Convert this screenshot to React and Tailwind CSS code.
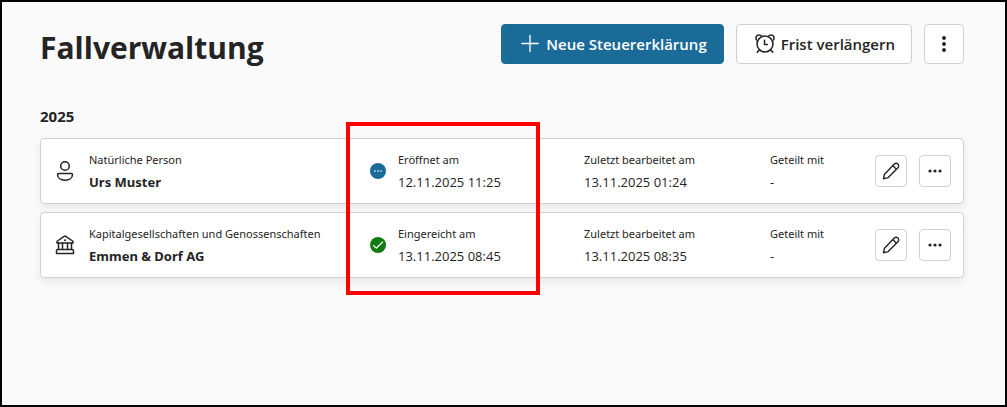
const cases = [
  {
    id: 1,
    icon: PersonIcon,
    type: "Natürliche Person",
    name: "Urs Muster",
    statusIcon: OpenStatusIcon,
    status: "Eröffnet am",
    statusDate: "12.11.2025 11:25",
    updated: "13.11.2025 01:24",
    shared: "-",
  },
  {
    id: 2,
    icon: BankIcon,
    type: "Kapitalgesellschaften und Genossenschaften",
    name: "Emmen & Dorf AG",
    statusIcon: DoneStatusIcon,
    status: "Eingereicht am",
    statusDate: "13.11.2025 08:45",
    updated: "13.11.2025 08:35",
    shared: "-",
  },
];

export default function App() {
  return (
    <div className="min-h-screen border-2 border-black bg-[#fafafa] pt-[22px] pr-[41px] pb-8 pl-[38px] font-['Open_Sans','Noto_Sans',sans-serif] text-[#242424]">
      <header className="flex items-start justify-between">
        <h1 className="pt-1 text-[30px] leading-10 font-bold">Fallverwaltung</h1>
        <div className="flex gap-3">
          <button className="flex h-10 items-center gap-1 rounded border border-[#1b6b98] bg-[#1b6b98] px-4 text-[15px] font-semibold whitespace-nowrap text-white">
            <PlusIcon />
            Neue Steuererklärung
          </button>
          <button className="flex h-10 items-center gap-1 rounded border border-[#d1d1d1] bg-white px-4 text-[15px] font-semibold whitespace-nowrap">
            <AlarmIcon />
            Frist verlängern
          </button>
          <button
            aria-label="Weitere Aktionen"
            className="flex size-10 items-center justify-center rounded border border-[#d1d1d1] bg-white"
          >
            <DotsIcon className="size-6 rotate-90" />
          </button>
        </div>
      </header>

      <section className="mt-9">
        <h2 className="text-[15px] leading-6 font-bold">2025</h2>
        <div className="relative mt-2.5">
          <ul className="flex flex-col gap-2">
            {cases.map((item) => (
              <CaseRow key={item.id} item={item} />
            ))}
          </ul>
          <div className="pointer-events-none absolute -top-4 right-[424px] h-[173px] w-[194px] border-4 border-[#ff0000]" />
        </div>
      </section>
    </div>
  );
}

function CaseRow({ item }) {
  const Icon = item.icon;
  const StatusIcon = item.statusIcon;

  return (
    <li className="flex items-center rounded border border-[#d1d1d1] bg-white px-3 py-2.5 shadow-[0_4px_8px_rgba(0,0,0,0.07)]">
      <div className="flex min-w-0 flex-1 items-center gap-3">
        <Icon />
        <Field label={item.type} value={item.name} bold />
      </div>
      <div className="flex w-[214px] items-center gap-3">
        <StatusIcon />
        <Field label={item.status} value={item.statusDate} />
      </div>
      <div className="w-[186px]">
        <Field label="Zuletzt bearbeitet am" value={item.updated} />
      </div>
      <div className="w-[105px]">
        <Field label="Geteilt mit" value={item.shared} />
      </div>
      <div className="flex gap-3">
        <button
          aria-label="Bearbeiten"
          className="flex size-8 items-center justify-center rounded border border-[#d1d1d1] bg-white"
        >
          <PencilIcon />
        </button>
        <button
          aria-label="Mehr"
          className="flex size-8 items-center justify-center rounded border border-[#d1d1d1] bg-white"
        >
          <DotsIcon className="size-5" />
        </button>
      </div>
    </li>
  );
}

function Field({ label, value, bold }) {
  return (
    <div className="whitespace-nowrap">
      <div className="font-['Noto_Sans',sans-serif] text-[11px] leading-[22px]">
        {label}
      </div>
      <div className={`text-[13px] leading-[22px] ${bold ? "font-['Noto_Sans',sans-serif] font-bold" : ""}`}>
        {value}
      </div>
    </div>
  );
}

function PlusIcon() {
  return (
    <svg viewBox="0 0 24 24" className="size-6 pb-px" fill="none" stroke="currentColor" strokeWidth="1.4" strokeLinecap="round">
      <path d="M12 3.500v17M3.500 12h17" />
    </svg>
  );
}

function AlarmIcon() {
  return (
    <svg viewBox="0 0 24 24" className="size-6 pb-px" fill="none" stroke="currentColor" strokeWidth="1.6" strokeLinecap="round" strokeLinejoin="round">
      <circle cx="12" cy="12.5" r="8.3" />
      <path d="M11.500 8.500v4.500h3M6.300 18.600l-2.300 2.400M17.700 18.600l2.300 2.400" />
      <path d="M3.100 8.200C1.800 5.800 3 3.200 5.500 3.200c1.500 0 2.600.6 3.300 1.700M20.900 8.200c1.300-2.400.1-5-2.400-5-1.500 0-2.600.6-3.300 1.700" />
    </svg>
  );
}

function DotsIcon({ className }) {
  return (
    <svg viewBox="0 0 20 20" className={className} fill="currentColor">
      <circle cx="5" cy="10" r="1.6" />
      <circle cx="10" cy="10" r="1.6" />
      <circle cx="15" cy="10" r="1.6" />
    </svg>
  );
}

function PencilIcon() {
  return (
    <svg viewBox="0 0 20 20" className="size-5" fill="none" stroke="currentColor" strokeWidth="1.4" strokeLinejoin="round">
      <path d="M13.3 3.1a2.500 2.500 0 0 1 3.600 3.600l-9.700 9.700a2 2 0 0 1-.9.5l-3.800.8.8-3.800a2 2 0 0 1 .5-.9z" />
      <path d="M11.800 4.600 15.400 8.200" />
    </svg>
  );
}

function PersonIcon() {
  return (
    <svg viewBox="0 0 24 24" className="size-6" fill="none" stroke="currentColor" strokeWidth="1.5" strokeLinejoin="round">
      <circle cx="12" cy="7" r="4.300" />
      <path d="M5.600 14.500h12.800c.7 0 1.100.4 1.100 1.100 0 3.600-3.300 5.600-7.500 5.600s-7.500-2-7.500-5.600c0-.7.4-1.100 1.100-1.100z" />
    </svg>
  );
}

function BankIcon() {
  return (
    <svg viewBox="0 0 24 24" className="size-6" fill="none" stroke="currentColor" strokeWidth="1.5" strokeLinejoin="round" strokeLinecap="round">
      <path d="M4 10V8.800a1 1 0 0 1 .4-.8l6.800-4.600a1.400 1.400 0 0 1 1.600 0L19.600 8a1 1 0 0 1 .4.8V10z" />
      <path d="M5.500 10v6.500M9.500 10v6.500M14.500 10v6.500M18.500 10v6.500" />
      <path d="M5 16.500h14a1.500 1.500 0 0 1 1.500 1.500v2.500h-17V18A1.500 1.500 0 0 1 5 16.500z" />
      <circle cx="12" cy="7.200" r="1" fill="currentColor" stroke="none" />
    </svg>
  );
}

function OpenStatusIcon() {
  return (
    <svg viewBox="0 0 16 16" className="size-4">
      <circle cx="8" cy="8" r="8" fill="#1b6b98" />
      <g fill="#a9cadb">
        <circle cx="5" cy="8" r="1" />
        <circle cx="8" cy="8" r="1" />
        <circle cx="11" cy="8" r="1" />
      </g>
    </svg>
  );
}

function DoneStatusIcon() {
  return (
    <svg viewBox="0 0 16 16" className="size-4">
      <circle cx="8" cy="8" r="8" fill="#107c10" />
      <path d="M3.500 8.500 6.300 11.200l6.300-6.200" fill="none" stroke="#fff" strokeWidth="1.100" strokeLinecap="round" />
    </svg>
  );
}
